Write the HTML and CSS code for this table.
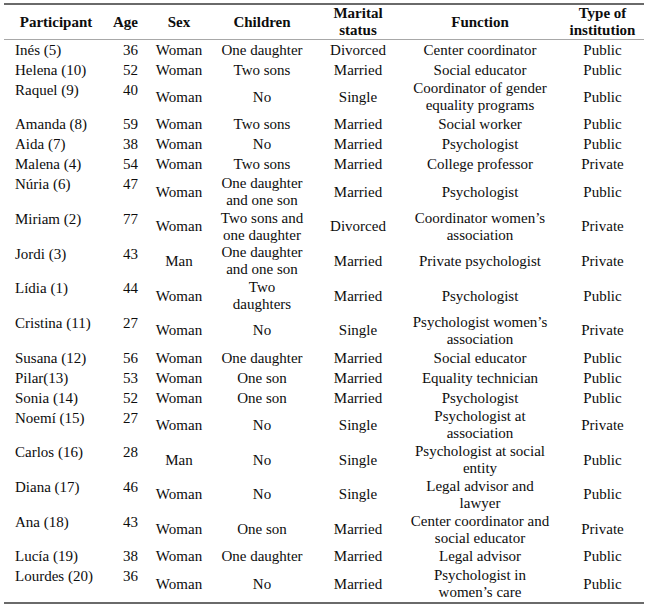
FILE: index.html
```html
<!DOCTYPE html>
<html lang="en">
<head>
<meta charset="utf-8">
<title>Participants</title>
<link rel="stylesheet" href="styles.css">
</head>
<body>
<table class="tbl">
  <colgroup>
    <col class="w-part"><col class="w-age"><col class="w-sex"><col class="w-child"><col class="w-mar"><col class="w-func"><col class="w-type">
  </colgroup>
  <thead>
    <tr>
      <th class="part-h">Participant</th>
      <th class="age">Age</th>
      <th>Sex</th>
      <th>Children</th>
      <th>Marital<br>status</th>
      <th>Function</th>
      <th class="type">Type of<br>institution</th>
    </tr>
  </thead>
  <tbody>
    <tr><td class="part">Inés (5)</td><td class="age">36</td><td>Woman</td><td>One daughter</td><td>Divorced</td><td>Center coordinator</td><td class="type">Public</td></tr>
    <tr><td class="part">Helena (10)</td><td class="age">52</td><td>Woman</td><td>Two sons</td><td>Married</td><td>Social educator</td><td class="type">Public</td></tr>
    <tr><td class="part">Raquel (9)</td><td class="age">40</td><td>Woman</td><td>No</td><td>Single</td><td>Coordinator of gender<br>equality programs</td><td class="type">Public</td></tr>
    <tr><td class="part">Amanda (8)</td><td class="age">59</td><td>Woman</td><td>Two sons</td><td>Married</td><td>Social worker</td><td class="type">Public</td></tr>
    <tr><td class="part">Aida (7)</td><td class="age">38</td><td>Woman</td><td>No</td><td>Married</td><td>Psychologist</td><td class="type">Public</td></tr>
    <tr><td class="part">Malena (4)</td><td class="age">54</td><td>Woman</td><td>Two sons</td><td>Married</td><td>College professor</td><td class="type">Private</td></tr>
    <tr><td class="part">Núria (6)</td><td class="age">47</td><td>Woman</td><td>One daughter<br>and one son</td><td>Married</td><td>Psychologist</td><td class="type">Public</td></tr>
    <tr><td class="part">Miriam (2)</td><td class="age">77</td><td>Woman</td><td>Two sons and<br>one daughter</td><td>Divorced</td><td>Coordinator women’s<br>association</td><td class="type">Private</td></tr>
    <tr><td class="part">Jordi (3)</td><td class="age">43</td><td>Man</td><td>One daughter<br>and one son</td><td>Married</td><td>Private psychologist</td><td class="type">Private</td></tr>
    <tr><td class="part">Lídia (1)</td><td class="age">44</td><td>Woman</td><td>Two<br>daughters</td><td>Married</td><td>Psychologist</td><td class="type">Public</td></tr>
    <tr><td class="part">Cristina (11)</td><td class="age">27</td><td>Woman</td><td>No</td><td>Single</td><td>Psychologist women’s<br>association</td><td class="type">Private</td></tr>
    <tr><td class="part">Susana (12)</td><td class="age">56</td><td>Woman</td><td>One daughter</td><td>Married</td><td>Social educator</td><td class="type">Public</td></tr>
    <tr><td class="part">Pilar(13)</td><td class="age">53</td><td>Woman</td><td>One son</td><td>Married</td><td>Equality technician</td><td class="type">Public</td></tr>
    <tr><td class="part">Sonia (14)</td><td class="age">52</td><td>Woman</td><td>One son</td><td>Married</td><td>Psychologist</td><td class="type">Public</td></tr>
    <tr><td class="part">Noemí (15)</td><td class="age">27</td><td>Woman</td><td>No</td><td>Single</td><td>Psychologist at<br>association</td><td class="type">Private</td></tr>
    <tr><td class="part">Carlos (16)</td><td class="age">28</td><td>Man</td><td>No</td><td>Single</td><td>Psychologist at social<br>entity</td><td class="type">Public</td></tr>
    <tr><td class="part">Diana (17)</td><td class="age">46</td><td>Woman</td><td>No</td><td>Single</td><td>Legal advisor and<br>lawyer</td><td class="type">Public</td></tr>
    <tr><td class="part">Ana (18)</td><td class="age">43</td><td>Woman</td><td>One son</td><td>Married</td><td>Center coordinator and<br>social educator</td><td class="type">Private</td></tr>
    <tr><td class="part">Lucía (19)</td><td class="age">38</td><td>Woman</td><td>One daughter</td><td>Married</td><td>Legal advisor</td><td class="type">Public</td></tr>
    <tr><td class="part">Lourdes (20)</td><td class="age">36</td><td>Woman</td><td>No</td><td>Married</td><td>Psychologist in<br>women’s care</td><td class="type">Public</td></tr>
  </tbody>
</table>
</body>
</html>
```
FILE: styles.css
```css
html, body {
  margin: 0;
  padding: 0;
  background: #ffffff;
}

body {
  padding: 3px 0 0 4px;
  font-family: "Liberation Serif", "Times New Roman", serif;
  font-size: 15px;
  color: #0d0d0d;
}

.tbl {
  width: 640px;
  table-layout: fixed;
  border-collapse: separate;
  border-spacing: 0;
  border-top: 2px solid #6a6a6a;
  border-bottom: 2px solid #6a6a6a;
}

.w-part { width: 104px; }
.w-age { width: 38px; }
.w-sex { width: 66px; }
.w-child { width: 100px; }
.w-mar { width: 92px; }
.w-func { width: 152px; }
.w-type { width: 88px; }

.tbl tr {
  height: 20px;
}

.tbl th,
.tbl td {
  padding: 0.35px 0;
  line-height: 17px;
  text-align: center;
  vertical-align: middle;
  white-space: nowrap;
  font-weight: normal;
}

.tbl th {
  font-weight: bold;
  padding: 0;
  border-bottom: 1px solid #a8a8a8;
}

.tbl td.part {
  text-align: left;
  vertical-align: top;
  padding: 1.5px 0 0 11px;
}

.tbl td.age {
  text-align: right;
  vertical-align: top;
  padding: 1.5px 8px 0 0;
}

.tbl th.age {
  text-align: right;
  padding-right: 8px;
}

.tbl .type {
  padding-left: 5px;
}
```
